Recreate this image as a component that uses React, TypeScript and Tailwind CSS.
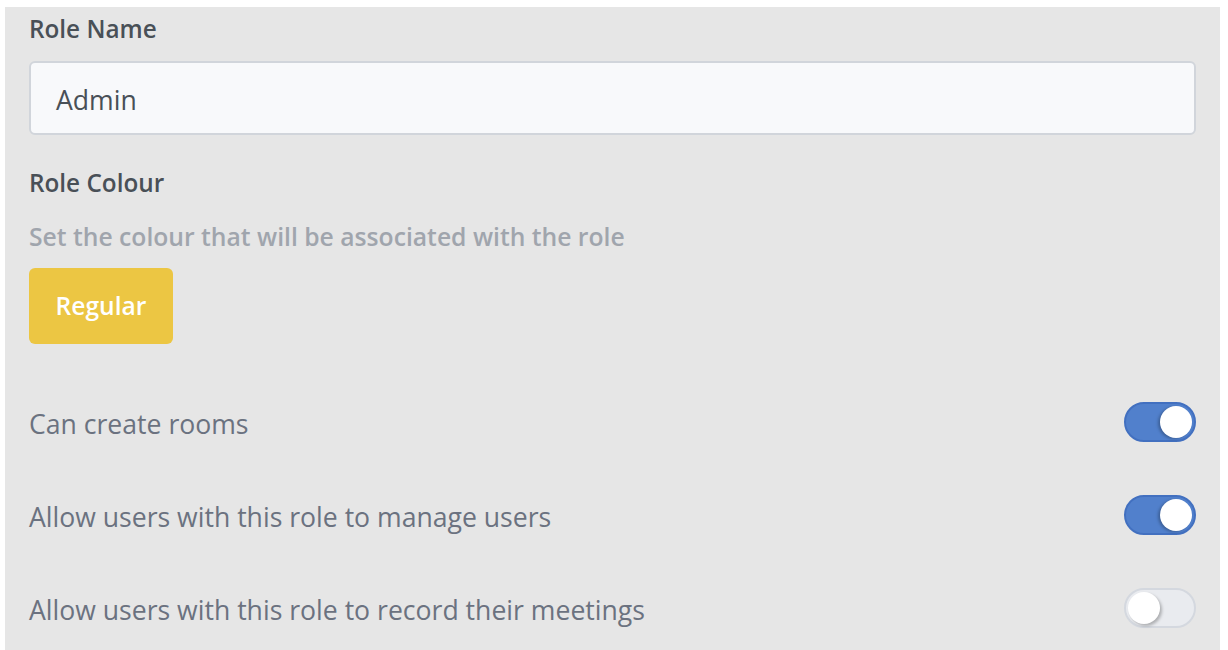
import React from "react";

function Toggle({ on }: { on: boolean }) {
  return (
    <div
      className={
        on
          ? "relative w-[72px] h-[40px] mb-[6px] rounded-full bg-[#5180cc] border-2 border-[#4270c0] shrink-0"
          : "relative w-[72px] h-[40px] mb-[6px] rounded-full bg-[#e9ebef] border-2 border-[#d4d8df] shrink-0"
      }
    >
      <div
        className={
          on
            ? "absolute top-[2px] right-[2px] w-[32px] h-[32px] rounded-full bg-white shadow-[-2px_1px_3px_rgba(0,0,0,0.25)]"
            : "absolute top-[2px] left-[2px] w-[32px] h-[32px] rounded-full bg-white shadow-[2px_2px_3px_rgba(0,0,0,0.25)]"
        }
      />
    </div>
  );
}

export default function App() {
  const rows = [
    { label: "Can create rooms", on: true },
    { label: "Allow users with this role to manage users", on: true },
    { label: "Allow users with this role to record their meetings", on: false },
  ];
  return (
    <div className="w-[1228px] h-[650px] bg-white pt-[7px] pl-[5px] pr-[8px] overflow-hidden" style={{ fontFamily: '"Open Sans", "Noto Sans", sans-serif' }}>
      <div className="h-[643px] bg-[#e6e6e6] pl-[24px] pr-[24px] pt-[8px]">
        <div className="text-[24.3px] leading-[28px] font-semibold text-[#495057]">Role Name</div>
        <div className="mt-[18px] h-[74px] rounded-[6px] border-2 border-[#d1d5db] bg-[#f8f9fb] flex items-center pl-[25px] pt-[5px] text-[26.6px] text-[#495057]">
          Admin
        </div>
        <div className="mt-[34px] text-[24.3px] leading-[28px] font-semibold text-[#495057]">Role Colour</div>
        <div className="mt-[26px] text-[24.7px] leading-[28px] font-semibold text-[#a0a5ad]">
          Set the colour that will be associated with the role
        </div>
        <div className="mt-[17px] w-[144px] h-[76px] rounded-[6px] bg-[#ecc643] flex items-center justify-center text-white text-[24.6px] font-semibold">
          Regular
        </div>
        <div className="mt-[34px] flex flex-col">
          {rows.map((r, i) => (
            <div key={i} className="h-[93px] flex items-center justify-between">
              <span className="text-[26.6px] text-[#6b7280]">{r.label}</span>
              <Toggle on={r.on} />
            </div>
          ))}
        </div>
      </div>
    </div>
  );
}
